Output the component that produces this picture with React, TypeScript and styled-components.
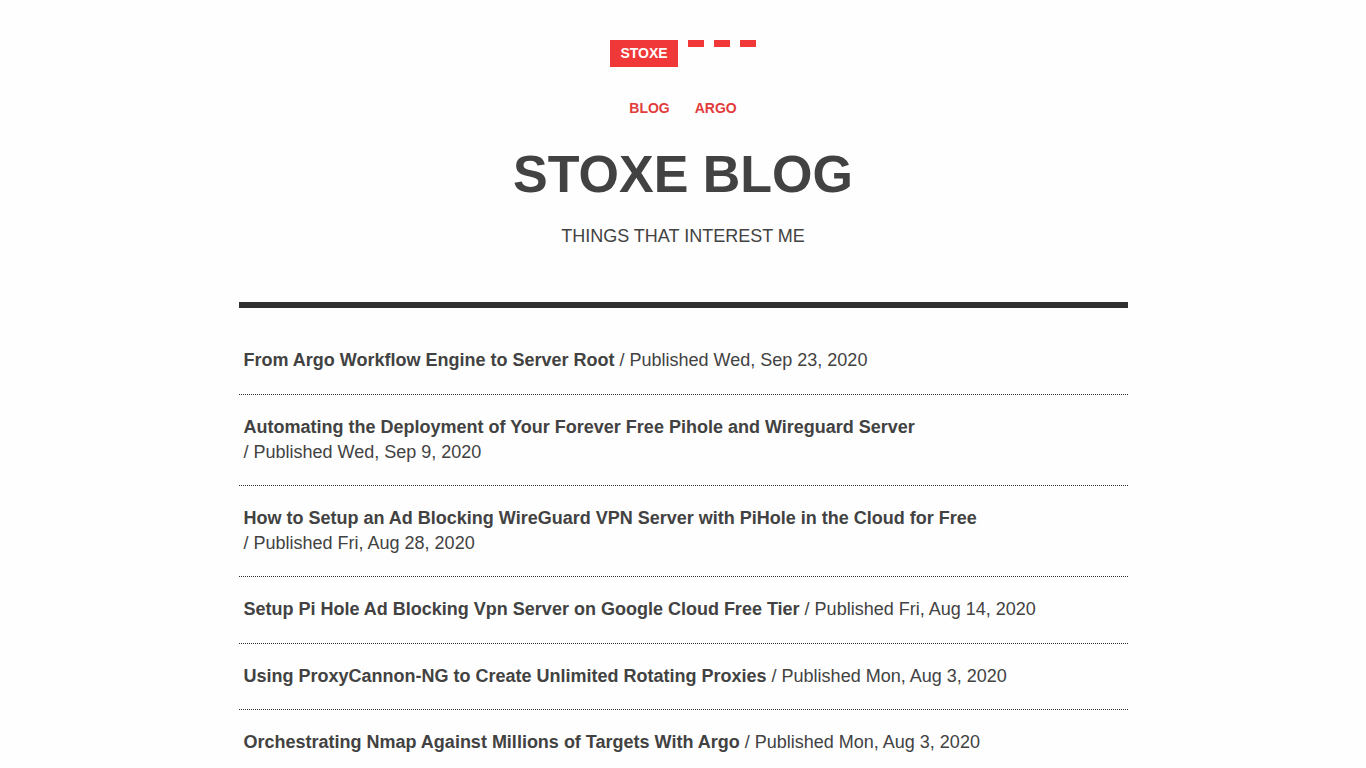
import React from 'react';
import styled, { createGlobalStyle } from 'styled-components';

const GlobalStyle = createGlobalStyle`
  * { box-sizing: border-box; }
  body {
    margin: 0;
    background: #fefefe;
    color: #424242;
    font-family: "Liberation Sans", Arial, sans-serif;
    font-size: 18px;
    line-height: 1.4;
  }
  a { color: inherit; text-decoration: none; }
`;

const Page = styled.div`
  width: 90%;
  max-width: 889px;
  margin: 0 auto;
  padding-top: 40px;
`;

const Header = styled.header`
  display: flex;
  flex-direction: column;
  align-items: center;
  text-align: center;
  text-transform: uppercase;
  padding-bottom: 53px;
  border-bottom: 6px solid #303030;
`;

const Brand = styled.div`
  display: flex;
  align-items: flex-start;
  gap: 10px;
`;

const Logo = styled.a`
  padding: 0 10px;
  background: #f03838;
  color: #fff;
  font-size: 14px;
  font-weight: bold;
  line-height: 27px;
`;

const Dash = styled.span`
  width: 16px;
  height: 7px;
  background: #f03838;
`;

const Nav = styled.nav`
  display: flex;
  gap: 25px;
  margin-top: 32px;
`;

const NavLink = styled.a`
  color: #e23c3c;
  font-size: 14px;
  font-weight: bold;
`;

const Title = styled.h1`
  margin: 22px 0 16px;
  font-size: 52px;
  line-height: 1.3;
`;

const Tagline = styled.p`
  margin: 0;
`;

const Posts = styled.ul`
  margin: 0;
  padding: 20px 0 0;
  list-style: none;
`;

const Post = styled.li`
  padding: 20px 5px;
  border-bottom: 1px dotted #303030;
`;

const PostLink = styled.a`
  font-weight: bold;
`;

const Published = styled.span`
  display: inline-block;
`;

const posts = [
  ['From Argo Workflow Engine to Server Root', 'Wed, Sep 23, 2020'],
  ['Automating the Deployment of Your Forever Free Pihole and Wireguard Server', 'Wed, Sep 9, 2020'],
  ['How to Setup an Ad Blocking WireGuard VPN Server with PiHole in the Cloud for Free', 'Fri, Aug 28, 2020'],
  ['Setup Pi Hole Ad Blocking Vpn Server on Google Cloud Free Tier', 'Fri, Aug 14, 2020'],
  ['Using ProxyCannon-NG to Create Unlimited Rotating Proxies', 'Mon, Aug 3, 2020'],
  ['Orchestrating Nmap Against Millions of Targets With Argo', 'Mon, Aug 3, 2020'],
];

export default function App() {
  return (
    <>
      <GlobalStyle />
      <Page>
        <Header>
          <Brand>
            <Logo href="#">Stoxe</Logo>
            <Dash />
            <Dash />
            <Dash />
          </Brand>
          <Nav>
            <NavLink href="#blog">Blog</NavLink>
            <NavLink href="#argo">Argo</NavLink>
          </Nav>
          <Title>Stoxe Blog</Title>
          <Tagline>Things that interest me</Tagline>
        </Header>
        <Posts>
          {posts.map(([title, date]) => (
            <Post key={title}>
              <PostLink href="#post">{title}</PostLink>{' '}
              <Published>/ Published {date}</Published>
            </Post>
          ))}
        </Posts>
      </Page>
    </>
  );
}
